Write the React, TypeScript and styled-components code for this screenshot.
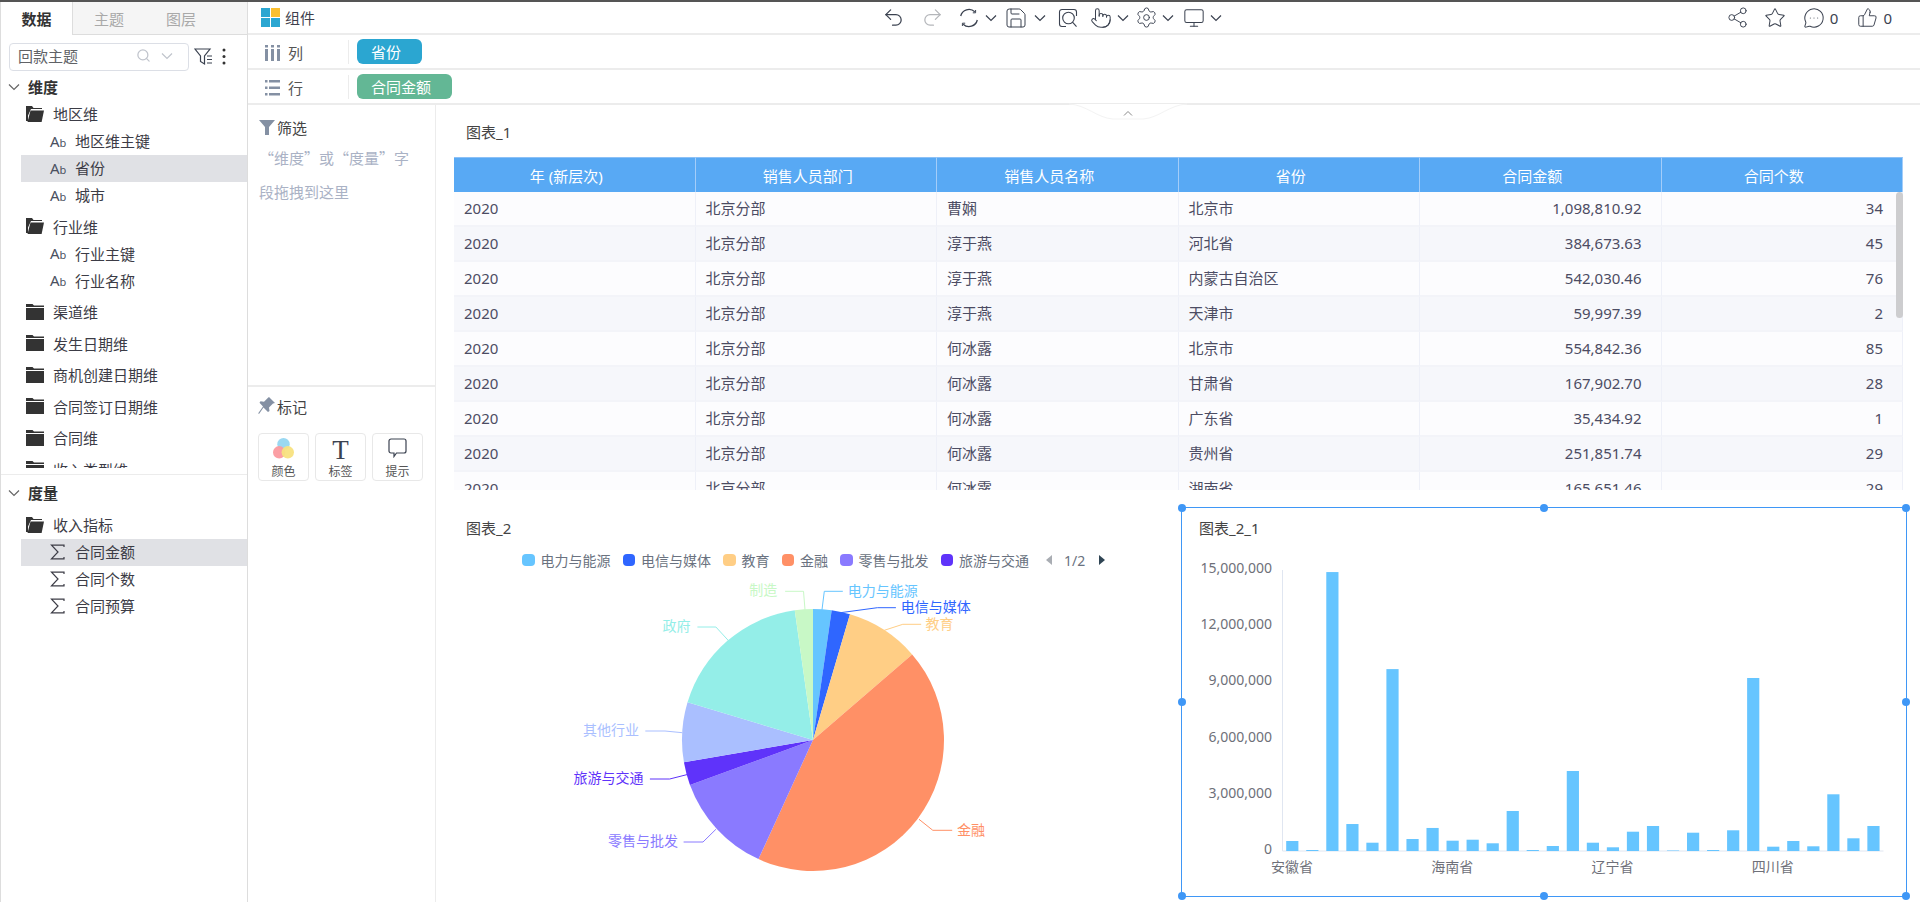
import React from "react";
import styled, { createGlobalStyle } from "styled-components";
import {
  MessageCircleMore,
  Monitor,
  Pointer,
  Redo2,
  Save,
  Search,
  Settings,
  Share2,
  Star,
  ThumbsUp,
  Undo2,
} from "lucide-react";

const TEXT_COLOR = "#3f3f4d";
const LINE_COLOR = "#ececec";
const ICON_GRAY = "#8490a3";
const BLUE = "#3f97f6";

const GlobalStyle = createGlobalStyle`
  html, body, #root {
    margin: 0;
    padding: 0;
    width: 100%;
    height: 100%;
    overflow: hidden;
    background: #fff;
  }
  * {
    box-sizing: border-box;
  }
  body {
    font-family: "Noto Sans", "Noto Sans CJK SC", sans-serif;
    font-size: 15px;
    color: ${TEXT_COLOR};
  }
`;

const Page = styled.div`
  display: flex;
  width: 1920px;
  height: 902px;
  border-top: 2px solid #555;
`;

/* ---------- left data panel ---------- */

const DataPanel = styled.aside`
  width: 248px;
  flex-shrink: 0;
  display: flex;
  flex-direction: column;
  border-left: 1px solid #ddd;
  border-right: 1px solid #ddd;
`;

const Tabs = styled.div`
  display: flex;
  height: 33px;
  background: #f5f5f5;
  border-bottom: 1px solid #ddd;
`;

const Tab = styled.div<{ $active?: boolean }>`
  width: 72px;
  height: ${(p) => (p.$active ? "33px" : "32px")};
  display: flex;
  align-items: center;
  justify-content: center;
  font-weight: ${(p) => (p.$active ? 700 : 400)};
  color: ${(p) => (p.$active ? "#333" : "#a9a9a9")};
  background: ${(p) => (p.$active ? "#fff" : "transparent")};
  border-right: ${(p) => (p.$active ? "1px solid #ddd" : "none")};
`;

const SubjectRow = styled.div`
  display: flex;
  align-items: center;
  height: 39px;
  padding: 6px 0 2px 8px;
`;

const SubjectBox = styled.div`
  width: 180px;
  height: 28px;
  display: flex;
  align-items: center;
  padding: 0 15px 2px 8px;
  border: 1px solid #dcdfe6;
  border-radius: 4px;
  color: #606266;
  span {
    flex: 1;
  }
  svg + svg {
    margin-left: 10px;
  }
`;

const SubjectTools = styled.div`
  display: flex;
  align-items: center;
  margin-left: 5px;
  gap: 8px;
`;

const TreeArea = styled.div<{ $height: number }>`
  height: ${(p) => p.$height}px;
  flex-shrink: 0;
  overflow: hidden;
`;

const SectionHead = styled.div<{ $height?: number }>`
  height: ${(p) => p.$height ?? 27}px;
  display: flex;
  align-items: center;
  gap: 8px;
  padding: 0 0 2px 7px;
  font-weight: 700;
  color: #333;
`;

const Divider = styled.div`
  height: 1px;
  margin-top: 6px;
  background: ${LINE_COLOR};
`;

const TreeGroup = styled.div`
  margin-bottom: 4.5px;
`;

const FolderRow = styled.div`
  height: 27px;
  display: flex;
  align-items: center;
  gap: 9px;
  padding: 0 0 2px 25px;
  color: #3c3c46;
`;

const LeafRow = styled.div<{ $selected?: boolean }>`
  height: 27px;
  margin-left: 20px;
  display: flex;
  align-items: center;
  padding: 0 0 2px 29px;
  gap: 9px;
  color: #3c3c46;
  background: ${(p) => (p.$selected ? "#e0e1e5" : "transparent")};
`;

const AbMark = styled.span`
  width: 16px;
  font-size: 15px;
  color: #4a5060;
  small {
    font-size: 11px;
  }
`;

/* ---------- toolbar ---------- */

const Main = styled.main`
  flex: 1;
  display: flex;
  flex-direction: column;
  min-width: 0;
`;

const TopBar = styled.header`
  height: 33px;
  display: flex;
  align-items: center;
  padding: 0 28px 0 13px;
  border-bottom: 2px solid ${LINE_COLOR};
  flex-shrink: 0;
`;

const Brand = styled.div`
  display: flex;
  align-items: center;
  gap: 5px;
  width: 56px;
`;

const ToolGroup = styled.div`
  display: flex;
  align-items: center;
  margin-left: 566px;
  color: #3b4250;
`;

const Tool = styled.span<{ $left: number; $muted?: boolean; $narrow?: boolean }>`
  display: flex;
  align-items: center;
  justify-content: center;
  width: ${(p) => (p.$narrow ? 12 : 20)}px;
  height: 20px;
  margin-left: ${(p) => p.$left}px;
  color: ${(p) => (p.$muted ? "#b4b6ba" : "inherit")};
  svg {
    flex-shrink: 0;
  }
`;

const SocialGroup = styled.div`
  margin-left: auto;
  display: flex;
  align-items: center;
  color: #3b4250;
`;

const Social = styled.span<{ $left: number }>`
  display: flex;
  align-items: center;
  gap: 5px;
  margin-left: ${(p) => p.$left}px;
`;

const ShelfRow = styled.div`
  height: 35px;
  flex-shrink: 0;
  display: flex;
  align-items: center;
  border-bottom: 2px solid ${LINE_COLOR};
`;

const ShelfName = styled.div`
  width: 101px;
  height: 24px;
  display: flex;
  align-items: center;
  gap: 8px;
  padding: 2px 0 0 17px;
  border-right: 1px solid ${LINE_COLOR};
  color: #555;
  margin-right: 8px;
`;

const Pill = styled.div<{ $color: string }>`
  height: 25px;
  display: flex;
  align-items: center;
  padding: 0 21px 0 14px;
  border-radius: 6px;
  color: #fff;
  background: ${(p) => p.$color};
`;

const Workspace = styled.div`
  flex: 1;
  display: flex;
  min-height: 0;
`;

/* ---------- filter and marks ---------- */

const SidePanel = styled.div`
  width: 188px;
  flex-shrink: 0;
  display: flex;
  flex-direction: column;
  border-right: 1px solid ${LINE_COLOR};
`;

const FilterArea = styled.div`
  height: 282px;
  padding: 11px 11px 0 11px;
  border-bottom: 2px solid ${LINE_COLOR};
`;

const PanelTitle = styled.div`
  display: flex;
  align-items: center;
  gap: 2px;
  height: 22px;
  color: #444;
`;

const DropHint = styled.p`
  margin: 3px 0 0;
  width: 160px;
  line-height: 34px;
  color: #aab2c5;
  font-family: "Noto Sans CJK SC", sans-serif;
  font-variant-east-asian: full-width;
`;

const MarkArea = styled.div`
  padding: 8px 10px;
`;

const MarkButtons = styled.div`
  display: flex;
  gap: 6px;
  margin-top: 16px;
`;

const MarkButton = styled.div`
  width: 51px;
  height: 48px;
  display: flex;
  flex-direction: column;
  align-items: center;
  justify-content: space-between;
  padding: 4px 0 0;
  border: 1px solid #e8e8e8;
  border-radius: 4px;
  font-size: 12px;
  color: #555;
`;

const TypeGlyph = styled.span`
  height: 24px;
  font-family: "Liberation Serif", serif;
  font-size: 27px;
  line-height: 24px;
  color: #3b4250;
`;

/* ---------- charts ---------- */

const Canvas = styled.section`
  position: relative;
  flex: 1;
  display: flex;
  flex-direction: column;
  min-width: 0;
`;

const CollapseTab = styled.svg`
  position: absolute;
  left: 633px;
  top: -2px;
  width: 118px;
  height: 18px;
`;

const TableChart = styled.div`
  height: 402px;
  flex-shrink: 0;
  padding: 17px 17px 0 18px;
`;

const ChartTitle = styled.div<{ $indent?: number }>`
  height: 20px;
  line-height: 20px;
  margin-left: ${(p) => p.$indent ?? 12}px;
  color: #444;
`;

const TableClip = styled.div`
  position: relative;
  height: 333px;
  margin-top: 15px;
  overflow: hidden;
`;

const DataTable = styled.table`
  width: 100%;
  table-layout: fixed;
  border-collapse: separate;
  border-spacing: 0;
`;

const HeadCell = styled.th`
  height: 35px;
  padding: 0 16px 0 0;
  font-weight: 400;
  color: #fff;
  background: #58a9f4;
  border-right: 1px solid #a3cdf9;
  border-top: 1px solid #8cc1f7;
  text-align: center;
`;

const BodyRow = styled.tr<{ $even: boolean }>`
  background: ${(p) => (p.$even ? "#f6f7fb" : "#fcfcfe")};
`;

const BodyCell = styled.td<{ $right?: boolean }>`
  height: 35px;
  padding: ${(p) => (p.$right ? "0 19px 2px 0" : "0 0 2px 10px")};
  text-align: ${(p) => (p.$right ? "right" : "left")};
  border-right: 1px solid #eef0f8;
  border-bottom: 2px solid #f3f4f9;
  color: #4c4c63;
`;

const ScrollThumb = styled.div`
  position: absolute;
  top: 35px;
  right: 0;
  width: 7px;
  height: 126px;
  border-radius: 4px;
  background: #cdcdcf;
`;

const BottomRow = styled.div`
  flex: 1;
  display: flex;
  min-height: 0;
`;

const PieChart = styled.div`
  flex: 1;
  padding-top: 11px;
`;

const Legend = styled.div`
  display: flex;
  align-items: center;
  height: 18px;
  margin: 13px 0 7px 86px;
  font-size: 14px;
  color: #6a7280;
`;

const LegendItem = styled.span`
  display: flex;
  align-items: center;
  gap: 6px;
  margin-right: 12px;
`;

const LegendSwatch = styled.i<{ $color: string }>`
  width: 12.5px;
  height: 12px;
  border-radius: 4px;
  background: ${(p) => p.$color};
`;

const LegendPager = styled.span`
  display: flex;
  align-items: center;
  gap: 12px;
  margin-left: 5px;
`;

const Arrow = styled.i<{ $dir: "left" | "right" }>`
  width: 0;
  height: 0;
  border-top: 5px solid transparent;
  border-bottom: 5px solid transparent;
  ${(p) =>
    p.$dir === "left"
      ? "border-right: 6px solid #a9adb3;"
      : "border-left: 6px solid #2f4554; margin-left: 2px;"}
`;

const ChartSvg = styled.svg`
  display: block;
  font-family: "Noto Sans", "Noto Sans CJK SC", sans-serif;
  font-size: 14px;
`;

const PieSvg = styled(ChartSvg)`
  margin-left: -1px;
`;

const BarChartBox = styled.div`
  position: relative;
  width: 726px;
  height: 390px;
  margin-right: 13px;
  border: 1px solid ${BLUE};
  flex-shrink: 0;
  padding-top: 10px;
`;

const Handle = styled.i<{ $x: number; $y: number }>`
  position: absolute;
  left: ${(p) => p.$x}%;
  top: ${(p) => p.$y}%;
  width: 8px;
  height: 8px;
  margin: -4px 0 0 -4px;
  border-radius: 50%;
  background: ${BLUE};
`;

/* ---------- hand drawn icons ---------- */

const FolderIcon = ({ open }: { open?: boolean }) => (
  <svg width="18" height="16" viewBox="0 0 18 16" fill="#333">
    {open ? (
      <>
        <path d="M0 0h6l1.500 2H16v1H5L2 9.500V15H0z" />
        <path d="M4.500 4.500H18L15.600 16H1.500z" />
      </>
    ) : (
      <>
        <path d="M0 0h6.500L8 1.500h10V3H0z" />
        <rect y="4" width="18" height="12" />
      </>
    )}
  </svg>
);

const SigmaIcon = () => (
  <svg width="16" height="16" viewBox="0 0 16 16" fill="none" stroke="#3c3c46" strokeWidth="1.200">
    <path d="M14 3V1.200H1.500L8 8l-6.500 6.800H14V13" />
  </svg>
);

const LogoIcon = () => (
  <svg width="19" height="19" viewBox="0 0 19 19">
    <rect width="9" height="9" fill="#2ba6d1" />
    <rect x="10" width="9" height="9" fill="#fbbf2e" />
    <rect y="10" width="9" height="9" fill="#2ba6d1" />
    <rect x="10" y="10" width="9" height="9" fill="#2ba6d1" />
  </svg>
);

const ChevronIcon = ({ color = "currentColor" }: { color?: string }) => (
  <svg width="12" height="8" viewBox="0 0 12 8" fill="none" stroke={color} strokeWidth="1.200">
    <path d="M1 1.500l5 5 5-5" />
  </svg>
);

const RefreshIcon = () => (
  <svg width="20" height="20" viewBox="0 0 20 20" fill="none" stroke="currentColor" strokeWidth="1.300">
    <path d="M1.700 8A8.500 8.500 0 0 1 15.800 3.800" />
    <path d="M18.300 12A8.500 8.500 0 0 1 4.200 16.200" />
    <path d="M16.600 2v2.800h-2.800" strokeWidth="1" />
    <path d="M3.400 18v-2.800h2.800" strokeWidth="1" />
  </svg>
);

const ScanIcon = () => (
  <svg width="20" height="20" viewBox="0 0 20 20" fill="none" stroke="currentColor" strokeWidth="1.100">
    <path d="M8 18.500H4A2.500 2.500 0 0 1 1.500 16V4A2.500 2.500 0 0 1 4 1.500h12A2.500 2.500 0 0 1 18.500 4v4" />
    <circle cx="10.500" cy="10" r="5.800" />
    <path d="M14.500 14.200l4 4.500" />
  </svg>
);

const ColumnsIcon = () => (
  <svg width="15" height="16" viewBox="0 0 15 16" fill={ICON_GRAY}>
    <rect x="0" y="0" width="3" height="2.500" />
    <rect x="6" y="0" width="3" height="2.500" />
    <rect x="12" y="0" width="3" height="2.500" />
    <rect x="0" y="4" width="3" height="12" />
    <rect x="6" y="4" width="3" height="12" />
    <rect x="12" y="4" width="3" height="12" />
  </svg>
);

const RowsIcon = () => (
  <svg width="15" height="16" viewBox="0 0 15 16" fill={ICON_GRAY}>
    <rect y="0" width="2.500" height="2.500" />
    <rect x="4" y="0" width="11" height="2.500" />
    <rect y="6.500" width="2.500" height="2.500" />
    <rect x="4" y="6.500" width="11" height="2.500" />
    <rect y="13" width="2.500" height="2.500" />
    <rect x="4" y="13" width="11" height="2.500" />
  </svg>
);

const FunnelListIcon = () => (
  <svg width="20" height="18" viewBox="0 0 20 18" fill="none" stroke="#3b4250" strokeWidth="1.200">
    <path d="M1 1h15L10.500 8v8L6.500 13.500V8z" />
    <path d="M13 8h5M13 11.500h5M13 15h5" />
  </svg>
);

const DotsIcon = () => (
  <svg width="4" height="17" viewBox="0 0 4 17" fill="#333">
    <circle cx="2" cy="2" r="1.500" />
    <circle cx="2" cy="8.500" r="1.500" />
    <circle cx="2" cy="15" r="1.500" />
  </svg>
);

const FunnelIcon = () => (
  <svg width="16" height="15" viewBox="0 0 16 15" fill={ICON_GRAY}>
    <path d="M0 0h16l-6 7v8H6V7z" />
  </svg>
);

const PinIcon = () => (
  <svg width="17" height="18" viewBox="0 0 17 18" fill={ICON_GRAY}>
    <path d="M11 0l6 6-2 .5-4 4 .5 3.500-1.500 1L5.500 10.500 1 17l-.8-.8L5 9.500 1.500 5.800l1-1.500 3.500.5 4-4z" />
  </svg>
);

const ColorIcon = () => (
  <svg width="21" height="21" viewBox="0 0 22 22">
    <circle cx="11" cy="6.500" r="6.500" fill="#9ad8f2" />
    <circle cx="6.500" cy="15" r="6.500" fill="#fb9a9f" opacity=".95" />
    <circle cx="15.500" cy="15" r="6.500" fill="#f8e27f" opacity=".95" />
  </svg>
);

const TipIcon = () => (
  <svg width="19" height="20" viewBox="0 0 19 20" fill="none" stroke="#3b4250" strokeWidth="1.200">
    <path d="M3 1h13a2 2 0 0 1 2 2v10a2 2 0 0 1-2 2H8.500l-2.500 3.500V15H3a2 2 0 0 1-2-2V3a2 2 0 0 1 2-2z" />
  </svg>
);

/* ---------- data ---------- */

const treeDimensions = [
  { name: "地区维", open: true, leaves: ["地区维主键", "省份", "城市"], selected: "省份" },
  { name: "行业维", open: true, leaves: ["行业主键", "行业名称"] },
  { name: "渠道维" },
  { name: "发生日期维" },
  { name: "商机创建日期维" },
  { name: "合同签订日期维" },
  { name: "合同维" },
  { name: "收入类型维" },
];

const columns = ["年 (新层次)", "销售人员部门", "销售人员名称", "省份", "合同金额", "合同个数"];

const rows = [
  ["曹娴", "北京市", "1,098,810.92", "34"],
  ["淳于燕", "河北省", "384,673.63", "45"],
  ["淳于燕", "内蒙古自治区", "542,030.46", "76"],
  ["淳于燕", "天津市", "59,997.39", "2"],
  ["何冰露", "北京市", "554,842.36", "85"],
  ["何冰露", "甘肃省", "167,902.70", "28"],
  ["何冰露", "广东省", "35,434.92", "1"],
  ["何冰露", "贵州省", "251,851.74", "29"],
  ["何冰露", "湖南省", "165,651.46", "29"],
];

const legend = [
  { name: "电力与能源", color: "#66c5ff" },
  { name: "电信与媒体", color: "#2f66ff" },
  { name: "教育", color: "#ffce85" },
  { name: "金融", color: "#ff9066" },
  { name: "零售与批发", color: "#8a7aff" },
  { name: "旅游与交通", color: "#5f33fa" },
];

const PIE_X = 378;
const PIE_Y = 164;
const PIE_R = 131;

const slices = [
  { name: "电力与能源", color: "#66c5ff", end: 8.2, line: "387,33.700 389.300,15.300 407.800,15.300", x: 412.7, y: 15, anchor: "start" },
  { name: "电信与媒体", color: "#2f66ff", end: 16.4, line: "405.500,36.700 442.400,31.700 460.900,31.700", x: 465.8, y: 31, anchor: "start" },
  { name: "教育", color: "#ffce85", end: 49.2, line: "449.300,54.300 467.800,48.300 486.200,48.300", x: 490.5, y: 48, anchor: "start" },
  { name: "金融", color: "#ff9066", end: 204.6, line: "484,243.300 497.800,254.300 517.200,254.300", x: 522, y: 254, anchor: "start" },
  { name: "零售与批发", color: "#8a7aff", end: 249.9, line: "280.900,253.300 268,266 248.600,266", x: 243, y: 265, anchor: "end" },
  { name: "旅游与交通", color: "#5f33fa", end: 260.2, line: "253.200,198.300 234.700,203 214.900,203", x: 208.5, y: 202, anchor: "end" },
  { name: "其他行业", color: "#aabfff", end: 286.7, line: "247.200,156.700 230,155 210.300,155", x: 204, y: 154, anchor: "end" },
  { name: "政府", color: "#94eee8", end: 352, line: "293.800,65 280.900,51 262.400,51", x: 255.5, y: 50, anchor: "end" },
  { name: "制造", color: "#c8f8c6", end: 360, line: "370,33.700 368.500,15.300 350.100,15.300", x: 342.3, y: 14, anchor: "end" },
];

const polar = (deg: number) => {
  const rad = (deg * Math.PI) / 180;
  return `${PIE_X + PIE_R * Math.sin(rad)} ${PIE_Y - PIE_R * Math.cos(rad)}`;
};

const slicePath = (start: number, end: number) =>
  `M${PIE_X} ${PIE_Y}L${polar(start)}A${PIE_R} ${PIE_R} 0 ${end - start > 180 ? 1 : 0} 1 ${polar(end)}Z`;

const barValues = [
  534000, 53000, 14890000, 1440000, 443000, 9710000, 640000, 1230000, 550000, 603000,
  411000, 2135000, 53000, 267000, 4270000, 443000, 197000, 1030000, 1335000, 27000,
  977000, 53000, 1105000, 9235000, 230000, 534000, 251000, 3027000, 678000, 1335000,
];

const yTicks = [0, 3000000, 6000000, 9000000, 12000000, 15000000];
const xTicks = [
  { name: "安徽省", x: 110 },
  { name: "海南省", x: 270.2 },
  { name: "辽宁省", x: 430.4 },
  { name: "四川省", x: 590.7 },
];

const AXIS_X = 100.5;
const AXIS_END = 701.5;
const BASE_Y = 313;
const PLOT_H = 281;
const handles = [
  [0, 0], [50, 0], [100, 0],
  [0, 50], [100, 50],
  [0, 100], [50, 100], [100, 100],
];

const App: React.FC = () => {
  return (
    <>
      <GlobalStyle />
      <Page>
        <DataPanel>
          <Tabs>
            <Tab $active>数据</Tab>
            <Tab>主题</Tab>
            <Tab>图层</Tab>
          </Tabs>
          <SubjectRow>
            <SubjectBox>
              <span>回款主题</span>
              <Search size={15} color="#c0c4cc" />
              <ChevronIcon color="#c0c4cc" />
            </SubjectBox>
            <SubjectTools>
              <FunnelListIcon />
              <DotsIcon />
            </SubjectTools>
          </SubjectRow>
          <TreeArea $height={394}>
            <SectionHead>
              <ChevronIcon color="#666" />
              维度
            </SectionHead>
            {treeDimensions.map((group) => (
              <TreeGroup key={group.name}>
                <FolderRow>
                  <FolderIcon open={group.open} />
                  {group.name}
                </FolderRow>
                {group.leaves?.map((leaf) => (
                  <LeafRow key={leaf} $selected={leaf === group.selected}>
                    <AbMark>
                      A<small>b</small>
                    </AbMark>
                    {leaf}
                  </LeafRow>
                ))}
              </TreeGroup>
            ))}
          </TreeArea>
          <Divider />
          <TreeArea $height={140}>
            <SectionHead $height={37}>
              <ChevronIcon color="#666" />
              度量
            </SectionHead>
            <FolderRow>
              <FolderIcon open />
              收入指标
            </FolderRow>
            {["合同金额", "合同个数", "合同预算"].map((leaf, i) => (
              <LeafRow key={leaf} $selected={i === 0}>
                <SigmaIcon />
                {leaf}
              </LeafRow>
            ))}
          </TreeArea>
        </DataPanel>

        <Main>
          <TopBar>
            <Brand>
              <LogoIcon />
              组件
            </Brand>
            <ToolGroup>
              <Tool $left={0}><Undo2 size={23} strokeWidth={1.3} /></Tool>
              <Tool $left={19} $muted><Redo2 size={23} strokeWidth={1.3} /></Tool>
              <Tool $left={17}><RefreshIcon /></Tool>
              <Tool $left={6} $narrow><ChevronIcon /></Tool>
              <Tool $left={9}><Save size={24} strokeWidth={1} /></Tool>
              <Tool $left={8} $narrow><ChevronIcon /></Tool>
              <Tool $left={12}><ScanIcon /></Tool>
              <Tool $left={13}><Pointer size={22} strokeWidth={1.1} /></Tool>
              <Tool $left={6} $narrow><ChevronIcon /></Tool>
              <Tool $left={7}><Settings size={23} strokeWidth={1} /></Tool>
              <Tool $left={6} $narrow><ChevronIcon /></Tool>
              <Tool $left={10}><Monitor size={22} strokeWidth={1.1} /></Tool>
              <Tool $left={6} $narrow><ChevronIcon /></Tool>
            </ToolGroup>
            <SocialGroup>
              <Social $left={0}><Share2 size={23} strokeWidth={1} /></Social>
              <Social $left={15}><Star size={22} strokeWidth={1.1} /></Social>
              <Social $left={17}><MessageCircleMore size={22} strokeWidth={1.1} />0</Social>
              <Social $left={19}><ThumbsUp size={21} strokeWidth={1.1} />0</Social>
            </SocialGroup>
          </TopBar>

          <ShelfRow>
            <ShelfName>
              <ColumnsIcon />
              列
            </ShelfName>
            <Pill $color="#2ba6d1">省份</Pill>
          </ShelfRow>
          <ShelfRow>
            <ShelfName>
              <RowsIcon />
              行
            </ShelfName>
            <Pill $color="#63b795">合同金额</Pill>
          </ShelfRow>

          <Workspace>
            <SidePanel>
              <FilterArea>
                <PanelTitle>
                  <FunnelIcon />
                  筛选
                </PanelTitle>
                <DropHint>“维度”或“度量”字段拖拽到这里</DropHint>
              </FilterArea>
              <MarkArea>
                <PanelTitle>
                  <PinIcon />
                  标记
                </PanelTitle>
                <MarkButtons>
                  <MarkButton><ColorIcon />颜色</MarkButton>
                  <MarkButton><TypeGlyph>T</TypeGlyph>标签</MarkButton>
                  <MarkButton><TipIcon />提示</MarkButton>
                </MarkButtons>
              </MarkArea>
            </SidePanel>

            <Canvas>
              <CollapseTab viewBox="0 0 118 18">
                <path d="M0 1C18 2 28 15 44 16H74C90 15 100 2 118 1Z" fill="#fff" />
                <path d="M0 1C18 2 28 15 44 16H74C90 15 100 2 118 1" fill="none" stroke="#f3f3f3" />
                <path d="M55 12.500l4-4 4 4" fill="none" stroke="#8a8a8a" />
              </CollapseTab>

              <TableChart>
                <ChartTitle>图表_1</ChartTitle>
                <TableClip>
                  <DataTable>
                    <thead>
                      <tr>
                        {columns.map((col) => (
                          <HeadCell key={col}>{col}</HeadCell>
                        ))}
                      </tr>
                    </thead>
                    <tbody>
                      {rows.map((row, i) => (
                        <BodyRow key={i} $even={i % 2 === 1}>
                          <BodyCell>2020</BodyCell>
                          <BodyCell>北京分部</BodyCell>
                          <BodyCell>{row[0]}</BodyCell>
                          <BodyCell>{row[1]}</BodyCell>
                          <BodyCell $right>{row[2]}</BodyCell>
                          <BodyCell $right>{row[3]}</BodyCell>
                        </BodyRow>
                      ))}
                    </tbody>
                  </DataTable>
                  <ScrollThumb />
                </TableClip>
              </TableChart>

              <BottomRow>
                <PieChart>
                  <ChartTitle $indent={30}>图表_2</ChartTitle>
                  <Legend>
                    {legend.map((item) => (
                      <LegendItem key={item.name}>
                        <LegendSwatch $color={item.color} />
                        {item.name}
                      </LegendItem>
                    ))}
                    <LegendPager>
                      <Arrow $dir="left" />
                      1/2
                      <Arrow $dir="right" />
                    </LegendPager>
                  </Legend>
                  <PieSvg width="745" height="320" viewBox="0 0 745 320">
                    {slices.map((s, i) => (
                      <path key={s.name} d={slicePath(i ? slices[i - 1].end : 0, s.end)} fill={s.color} />
                    ))}
                    {slices.map((s) => (
                      <g key={s.name}>
                        <polyline points={s.line} fill="none" stroke={s.color} />
                        <text x={s.x} y={s.y} dy="5" fill={s.color} textAnchor={s.anchor}>
                          {s.name}
                        </text>
                      </g>
                    ))}
                  </PieSvg>
                </PieChart>

                <BarChartBox>
                  <ChartTitle $indent={17}>图表_2_1</ChartTitle>
                  <ChartSvg width="724" height="350" viewBox="0 0 724 350">
                    <path d={`M${AXIS_X} ${BASE_Y - PLOT_H}V${BASE_Y}H${AXIS_END}`} fill="none" stroke="#e0e6f1" />
                    {yTicks.map((v) => (
                      <text
                        key={v}
                        x="90"
                        y={BASE_Y - (v / 15000000) * PLOT_H - 2}
                        dy="5"
                        textAnchor="end"
                        fill="#6e7079"
                      >
                        {v.toLocaleString("en-US")}
                      </text>
                    ))}
                    {barValues.map((v, i) => {
                      const h = (v / 15000000) * PLOT_H;
                      return (
                        <rect
                          key={i}
                          x={104.2 + i * 20.04}
                          y={BASE_Y - h}
                          width="12.200"
                          height={h}
                          fill="#66c5ff"
                        />
                      );
                    })}
                    {xTicks.map((t) => (
                      <text key={t.name} x={t.x} y={BASE_Y + 16} dy="5" textAnchor="middle" fill="#6e7079">
                        {t.name}
                      </text>
                    ))}
                  </ChartSvg>
                  {handles.map(([x, y]) => (
                    <Handle key={`${x}-${y}`} $x={x} $y={y} />
                  ))}
                </BarChartBox>
              </BottomRow>
            </Canvas>
          </Workspace>
        </Main>
      </Page>
    </>
  );
};

export default App;
